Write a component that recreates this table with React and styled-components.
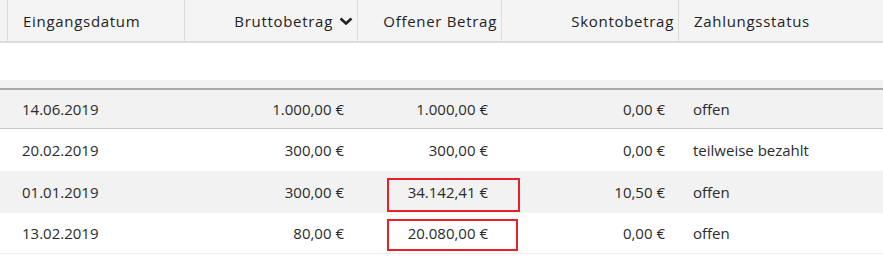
import React from "react";
import styled, { createGlobalStyle } from "styled-components";

const GlobalStyle = createGlobalStyle`
  html, body { margin: 0; padding: 0; background: #fff; }
  body { font-family: "Open Sans", "Noto Sans", sans-serif; font-size: 15px; color: #2b2b2b; }
`;

const cols = "7px 177px 173px 144px 177px 1fr";

const rows = [
  { date: "14.06.2019", gross: "1.000,00 €", open: "1.000,00 €", discount: "0,00 €", status: "offen", shade: true },
  { date: "20.02.2019", gross: "300,00 €", open: "300,00 €", discount: "0,00 €", status: "teilweise bezahlt" },
  { date: "01.01.2019", gross: "300,00 €", open: "34.142,41 €", discount: "10,50 €", status: "offen", shade: true, mark: { top: 7, bottom: 1, right: -19 } },
  { date: "13.02.2019", gross: "80,00 €", open: "20.080,00 €", discount: "0,00 €", status: "offen", mark: { top: 6, bottom: 2, right: -17 } },
];

const Table = styled.div`
  width: 883px;
`;

const HeaderRow = styled.div`
  display: grid;
  grid-template-columns: ${cols};
  height: 41px;
  background: #f4f4f4;
  border-bottom: 2px solid #dcdcdc;
  color: #222;
`;

const HeadCell = styled.div`
  display: flex;
  align-items: center;
  justify-content: ${(p) => (p.$right ? "flex-end" : "flex-start")};
  gap: 6px;
  padding: ${(p) => (p.$right ? "0 4px 0 0" : "0 0 0 15px")};
  border-left: ${(p) => (p.$first ? "none" : "1px solid #dcdcdc")};
  white-space: nowrap;
  letter-spacing: 0.7px;
`;

const Spacer = styled.div`
  height: 37px;
  background: #fff;
`;

const Band = styled.div`
  height: 8px;
  background: #f2f2f2;
  border-bottom: 2px solid #aaaaaa;
`;

const Row = styled.div`
  display: grid;
  grid-template-columns: ${cols};
  height: ${(p) => p.$h}px;
  background: ${(p) => (p.$shade ? "#f2f2f2" : "#fff")};
  border-bottom: ${(p) => (p.$line ? `1px solid ${p.$line}` : "none")};
`;

const Cell = styled.div`
  position: relative;
  display: flex;
  align-items: center;
  justify-content: ${(p) => (p.$right ? "flex-end" : "flex-start")};
  padding: ${(p) => (p.$right ? "0 13px 0 0" : "0 0 0 15px")};
  white-space: nowrap;
`;

const Mark = styled.div`
  position: absolute;
  left: 30px;
  top: ${(p) => p.$top}px;
  bottom: ${(p) => p.$bottom}px;
  right: ${(p) => p.$right}px;
  border: 2px solid #e8202a;
`;

const Chevron = () => (
  <svg width="14" height="8" viewBox="0 0 14 8">
    <path d="M1.5 1.5 L7 6.5 L12.5 1.5" fill="none" stroke="#222" strokeWidth="2.6" />
  </svg>
);

export default function App() {
  const heights = [38, 42, 42, 40];
  const lines = ["#c8c8c8", null, null, "#f0f0f0"];
  return (
    <>
      <GlobalStyle />
      <Table>
        <HeaderRow>
          <HeadCell $first />
          <HeadCell>Eingangsdatum</HeadCell>
          <HeadCell $right>
            Bruttobetrag <Chevron />
          </HeadCell>
          <HeadCell $right>Offener Betrag</HeadCell>
          <HeadCell $right>Skontobetrag</HeadCell>
          <HeadCell>Zahlungsstatus</HeadCell>
        </HeaderRow>
        <Spacer />
        <Band />
        {rows.map((r, i) => (
          <Row key={i} $shade={r.shade} $h={heights[i]} $line={lines[i]}>
            <Cell />
            <Cell>{r.date}</Cell>
            <Cell $right>{r.gross}</Cell>
            <Cell $right>
              {r.mark && <Mark $top={r.mark.top} $bottom={r.mark.bottom} $right={r.mark.right} />}
              {r.open}
            </Cell>
            <Cell $right>{r.discount}</Cell>
            <Cell>{r.status}</Cell>
          </Row>
        ))}
      </Table>
    </>
  );
}
